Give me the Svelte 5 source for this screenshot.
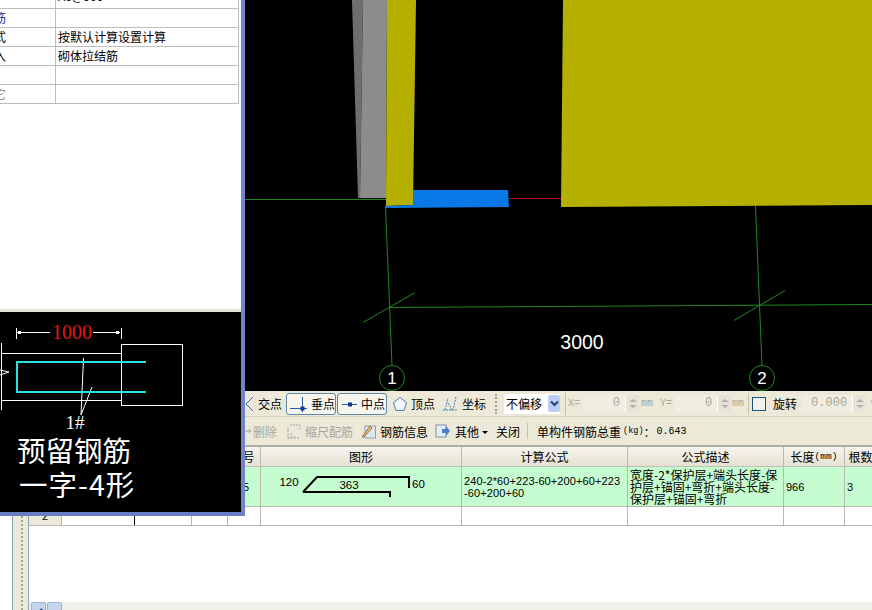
<script>
  const attrRows = [
    { key: "", val: "A6@500", cut: true },
    { key: "筋", val: "", blue: true },
    { key: "式", val: "按默认计算设置计算" },
    { key: "入", val: "砌体拉结筋" },
    { key: "", val: "" },
    { key: "它", val: "", grey: true }
  ];
  const cols = [33, 73, 57, 36, 33, 201, 166, 156, 61, 32];
  const heads = ["", "", "", "", "号", "图形", "计算公式", "公式描述", "长度", "根数"];
</script>

<div class="screen">
  <div class="main">
    <svg class="cad" width="872" height="391" viewBox="0 0 872 391">
      <polygon points="352,0 363,0 360,198 358,198" fill="#6e6e6e" />
      <polygon points="363,0 387,0 386,198 360,198" fill="#8c8c8c" />
      <polygon points="387,0 416,0 413,205 386,206" fill="#b5b000" />
      <polygon points="563,0 872,0 872,205 561,207" fill="#b5b000" />
      <polygon points="413,190 508,190 509,207 386,208 386,206 413,205" fill="#0a78e6" />
      <line x1="509" y1="198.500" x2="561" y2="198.500" stroke="#b01020" />
      <g stroke="#208820" fill="none">
        <line x1="245" y1="199.500" x2="386" y2="199.500" />
        <line x1="385.500" y1="206" x2="392" y2="366" />
        <line x1="755.500" y1="206" x2="762" y2="366" />
        <line x1="389" y1="307.500" x2="872" y2="304.500" />
        <line x1="363" y1="322.500" x2="415" y2="292.500" />
        <line x1="734" y1="320.500" x2="785" y2="290.500" />
        <circle cx="392" cy="378" r="12.500" />
        <circle cx="762" cy="378" r="12.500" />
      </g>
      <g class="cad-text">
        <text x="582" y="349" text-anchor="middle" font-size="19.500">3000</text>
        <text x="392" y="384" text-anchor="middle" font-size="17">1</text>
        <text x="762" y="384" text-anchor="middle" font-size="17">2</text>
      </g>
    </svg>

    <div class="toolbar snaps">
      <svg class="ic" width="10" height="20" viewBox="0 0 10 20"><path d="M8 3 1 10l7 7" stroke="#3c6ea0" fill="none" /></svg>
      <span class="tool jiao">交点</span>
      <span class="toggle">
        <svg width="19" height="18" viewBox="0 0 19 18"><path d="M0 13.500h17M12.500 2v15" stroke="#2a5ca8" fill="none" /><rect x="10.500" y="11.500" width="4" height="4" fill="#123c8c" /></svg>
        垂点
      </span>
      <span class="toggle mid-snap">
        <svg width="17" height="16" viewBox="0 0 17 16"><path d="M0 8.500h15" stroke="#2a5ca8" fill="none" /><rect x="6" y="6.500" width="4" height="4" fill="#123c8c" /></svg>
        中点
      </span>
      <svg class="ic vertex" width="16" height="16" viewBox="0 0 16 16"><path d="M8 1.500 14.500 6.500 12 14.500H4L1.500 6.500Z" stroke="#4a80b8" fill="#f4f6f8" /></svg>
      <span class="tool">顶点</span>
      <svg class="ic coord" width="17" height="18" viewBox="0 0 17 18"><path d="M3 15 6 3M1 15h15M6 8l4 7M14 2l-3 13" stroke="#3c86b8" stroke-dasharray="2 1" fill="none" /></svg>
      <span class="tool">坐标</span>
      <span class="grip"></span>
      <span class="combo">不偏移<span class="arrow"><svg width="9" height="7" viewBox="0 0 9 7"><path d="M1 1.500 4.500 5 8 1.500" stroke="#25407a" stroke-width="2" fill="none" /></svg></span></span>
      <span class="sep s1"></span>
      <span class="muted lab">X=</span>
      <span class="spin"><span class="num w42">0</span><span class="updown"><i></i><i class="down"></i></span></span>
      <span class="muted mm m2">mm</span>
      <span class="muted lab y">Y=</span>
      <span class="spin"><span class="num w42">0</span><span class="updown"><i></i><i class="down"></i></span></span>
      <span class="muted mm m1">mm</span>
      <span class="sep s2"></span>
      <span class="check"></span>
      <span class="rot">旋转</span>
      <span class="spin"><span class="num w50">0.000</span><span class="updown"><i></i><i class="down"></i></span></span>
      <span class="muted deg">°</span>
    </div>

    <div class="toolbar actions">
      <svg class="ic back" width="8" height="8" viewBox="0 0 8 8"><path d="M0 4h5M3.500 2 6 4 3.500 6" stroke="#a8a898" fill="none" /></svg>
      <span class="muted">删除</span>
      <svg class="ic a1" width="14" height="16" viewBox="0 0 14 16"><path d="M1 15V4M4 15v-5M7 15v-3M1 15h12M3 2h10v4" stroke="#a8a8a0" stroke-dasharray="2 1" fill="none" /></svg>
      <span class="muted g4">缩尺配筋</span>
      <svg class="ic a2" width="15" height="16" viewBox="0 0 15 16"><rect x="4" y="3" width="10.500" height="12" fill="#dfe8f2" stroke="#8aa0b8" /><path d="M1 14 9 3l2 2-8 9Z" fill="#e8c070" stroke="#907040" /></svg>
      <span class="g4">钢筋信息</span>
      <svg class="ic a3" width="16" height="16" viewBox="0 0 16 16"><rect x="1" y="2" width="10" height="12" fill="#e4ecf4" stroke="#7a90a8" /><path d="M7 6h4V3l4 5-4 5v-3H7Z" fill="#4a80c8" /></svg>
      <span class="g4">其他</span>
      <span class="caret"></span>
      <span>关闭</span>
      <span class="sep short"></span>
      <span>单构件钢筋总重</span>
      <span class="kg">(kg)</span>
      <span class="colon">：</span>
      <span class="weight">0.643</span>
    </div>

    <div class="lower">
      <div class="gutter"></div>
      <div class="grid">
        <div class="row head">
          {#each cols as w, i}
            <div class="cell" class:hao={i === 4} style="width:{w}px">
              {heads[i]}{#if i === 8}<small>(mm)</small>{/if}
            </div>
          {/each}
        </div>
        <div class="row data">
          <div class="cell" style="width:{cols[0]}px"></div>
          <div class="cell" style="width:{cols[1]}px"></div>
          <div class="cell" style="width:{cols[2]}px"></div>
          <div class="cell" style="width:{cols[3]}px"></div>
          <div class="cell mid cut-val" style="width:{cols[4]}px">5</div>
          <div class="cell shape" style="width:{cols[5]}px">
            <svg width="200" height="39" viewBox="0 0 200 39">
              <path d="M42 25 56 10H148V21M42 25H129V30" fill="none" stroke="#000" stroke-width="2" />
              <text x="28" y="19" text-anchor="middle">120</text>
              <text x="88" y="22" text-anchor="middle">363</text>
              <text x="151" y="21">60</text>
            </svg>
          </div>
          <div class="cell text formula" style="width:{cols[6]}px">240-2*60+223-60+200+60+223<br />-60+200+60</div>
          <div class="cell text" style="width:{cols[7]}px">宽度-2*保护层+端头长度-保<br />护层+锚固+弯折+端头长度-<br />保护层+锚固+弯折</div>
          <div class="cell mid" style="width:{cols[8]}px">966</div>
          <div class="cell mid" style="width:{cols[9]}px">3</div>
        </div>
        <div class="row blank">
          <div class="cell idx2" style="width:{cols[0]}px">2</div>
          <div class="cell cursor" style="width:{cols[1]}px"></div>
          <div class="cell" style="width:{cols[2]}px"></div>
          <div class="cell" style="width:{cols[3]}px"></div>
          <div class="cell" style="width:{cols[4]}px"></div>
          <div class="cell" style="width:{cols[5]}px"></div>
          <div class="cell" style="width:{cols[6]}px"></div>
          <div class="cell" style="width:{cols[7]}px"></div>
          <div class="cell" style="width:{cols[8]}px"></div>
          <div class="cell" style="width:{cols[9]}px"></div>
        </div>
        <div class="filler"></div>
        <div class="tabs">
          <span class="tab"><svg width="13" height="10" viewBox="0 0 13 10"><path d="M3 9 10 2" stroke="#24406c" stroke-width="2" /></svg></span>
          <span class="tab"><svg width="13" height="10" viewBox="0 0 13 10"><path d="M2 3v7M5 3v7M8 3v7M11 3v7" stroke="#7a94c8" /></svg></span>
        </div>
      </div>
    </div>
  </div>

  <div class="win">
    <div class="attrs">
      {#each attrRows as r}
        <div class="attr" class:cut={r.cut}>
          <div class="k" class:blue={r.blue} class:grey={r.grey}><span>{r.key}</span></div>
          <div class="v">{r.val}</div>
        </div>
      {/each}
    </div>
    <div class="spacer"></div>
    <div class="preview">
      <svg width="241" height="200" viewBox="0 0 241 200">
        <g fill="none" stroke="#fff">
          <path d="M16.500 16v11M121.500 16v11M17 20.500H50M93 20.500h27" />
          <rect x="121.500" y="32.500" width="61" height="61" />
          <path d="M1.500 31v67M1 41.500H121M1 88.500H121M0 58l9 2-9 3" />
          <path d="M83.500 46 81 103 92 75" />
        </g>
        <rect x="18" y="19" width="3" height="3" fill="#fff" />
        <rect x="116" y="19" width="3" height="3" fill="#fff" />
        <path d="M146 50H17V80H146" fill="none" stroke="#2ce0e0" stroke-width="2" />
        <text class="dim" x="72" y="27" text-anchor="middle">1000</text>
        <text class="tag" x="75" y="117" text-anchor="middle">1#</text>
        <text class="title" x="17" y="150">预留钢筋</text>
        <text class="title wide" x="19" y="184">一字-4形</text>
      </svg>
    </div>
  </div>
</div>

<style>
  :global(body) {
    margin: 0;
    background: #fff;
  }

  .screen {
    position: relative;
    width: 872px;
    height: 610px;
    overflow: hidden;
    font-family: "Noto Sans CJK SC", "Liberation Sans", sans-serif;
    font-size: 12px;
    color: #000;
  }

  .main {
    height: 100%;
    display: flex;
    flex-direction: column;
  }

  .cad {
    display: block;
    flex: none;
    background: #000;
  }

  .cad-text text {
    fill: #fff;
    font-family: "Liberation Sans", sans-serif;
  }

  .toolbar {
    display: flex;
    align-items: center;
    flex: none;
    background: #ece9d8;
    box-sizing: border-box;
    white-space: nowrap;
    padding-left: 245px;
  }

  .toolbar > * {
    flex: none;
  }

  .snaps {
    height: 26px;
    border-bottom: 1px solid #d8d4c0;
  }

  .actions {
    height: 30px;
    border-bottom: 2px solid #a8b0a8;
  }

  .tool {
    margin-left: 3px;
  }

  .jiao {
    margin-right: 4px;
  }

  .toggle {
    display: flex;
    align-items: center;
    width: 50px;
    height: 22px;
    padding-left: 3px;
    gap: 2px;
    background: #f6f5ee;
    border: 1px solid #5f88a8;
    border-radius: 3px;
    box-sizing: border-box;
  }

  .mid-snap {
    margin-left: 1px;
    padding-left: 4px;
  }

  .vertex {
    margin-left: 5px;
  }

  .coord {
    margin-left: 7px;
  }

  .grip {
    width: 2px;
    height: 20px;
    margin: 0 5px 0 9px;
    border-left: 2px dotted #a8a490;
  }

  .combo {
    display: flex;
    align-items: center;
    width: 56px;
    height: 20px;
    background: #fff;
    padding-left: 2px;
    box-sizing: border-box;
    justify-content: space-between;
  }

  .arrow {
    display: flex;
    align-items: center;
    justify-content: center;
    width: 12px;
    height: 17px;
    background: #bccdf0;
    border-radius: 2px;
  }

  .sep {
    width: 1px;
    height: 22px;
    background: #c4c0aa;
  }

  .s1 {
    margin: 0 2px 0 5px;
  }

  .s2 {
    margin: 0 3px 0 4px;
  }

  .muted {
    color: #a8a898;
  }

  .lab,
  .mm {
    font-family: "Liberation Mono", monospace;
    font-size: 10px;
  }

  .lab {
    margin-right: 3px;
  }

  .lab.y {
    margin-left: 7px;
  }

  .m1 {
    margin-left: 1px;
  }

  .m2 {
    margin-left: 2px;
  }

  .spin {
    display: flex;
    height: 17px;
    background: #f0eee0;
  }

  .num {
    font-family: "Liberation Mono", monospace;
    text-align: right;
    color: #a8a898;
    line-height: 16px;
    padding-right: 5px;
    box-sizing: border-box;
  }

  .w42 {
    width: 42px;
  }

  .w50 {
    width: 50px;
  }

  .updown {
    display: flex;
    flex-direction: column;
    align-items: center;
    justify-content: center;
    gap: 3px;
    width: 14px;
    background: #e6e4d8;
    border-left: 1px solid #fff;
    box-sizing: border-box;
  }

  .updown i {
    width: 0;
    height: 0;
    border: 4px solid transparent;
    border-top: 0;
    border-bottom: 3px solid #b4b2a4;
  }

  .updown i.down {
    border: 4px solid transparent;
    border-bottom: 0;
    border-top: 3px solid #b4b2a4;
  }

  .check {
    width: 14px;
    height: 14px;
    border: 1px solid #1c5180;
    background: #f2f2ec;
    margin-right: 7px;
    box-sizing: border-box;
  }

  .rot {
    margin-right: 5px;
  }

  .deg {
    margin-left: 4px;
  }

  .back {
    margin-right: 0;
  }

  .a1 {
    margin-left: 10px;
  }

  .a2 {
    margin-left: 8px;
  }

  .a3 {
    margin-left: 7px;
  }

  .g4 {
    margin-left: 4px;
  }

  .caret {
    width: 0;
    height: 0;
    margin: 2px 8px 0 3px;
    border: 3px solid transparent;
    border-top-color: #000;
    border-bottom: 0;
  }

  .short {
    height: 16px;
    margin: 0 9px 0 7px;
  }

  .kg {
    font-family: "Liberation Mono", monospace;
    font-size: 8.500px;
    margin-left: 2px;
  }

  .colon {
    width: 13px;
  }

  .weight {
    font-family: "Liberation Mono", monospace;
    font-size: 10px;
  }

  .lower {
    flex: 1;
    min-height: 0;
    display: flex;
    padding-left: 12px;
  }

  .gutter {
    position: relative;
    width: 17px;
    flex: none;
    background: #ece9d8;
    border-left: 1px solid #8ea4b8;
    border-right: 1px solid #8ea4b8;
    box-sizing: border-box;
  }

  .gutter::after {
    content: "";
    position: absolute;
    left: 8px;
    top: 0;
    bottom: 0;
    border-left: 2px dotted #a8a490;
  }

  .grid {
    flex: 1;
    min-width: 0;
    display: flex;
    flex-direction: column;
    overflow: hidden;
    background: #fff;
  }

  .row {
    display: flex;
    flex: none;
  }

  .head {
    height: 20px;
    background: linear-gradient(#f6f5ef, #e4e1d2);
    line-height: 18px;
    border-bottom: 1px solid #c0c0b8;
    box-sizing: border-box;
  }

  .head .cell {
    justify-content: center;
  }

  .head .hao {
    padding-left: 9px;
  }

  .head small {
    font-family: "Liberation Mono", monospace;
    font-size: 9.500px;
  }

  .data {
    height: 40px;
    background: #c6fdd0;
    border-bottom: 1px solid #b8b8b0;
    box-sizing: border-box;
  }

  .blank {
    height: 19px;
    border-bottom: 1px solid #b8b8b0;
    box-sizing: border-box;
  }

  .cell {
    display: flex;
    align-items: center;
    flex: none;
    box-sizing: border-box;
    border-right: 1px solid #b8b8b0;
    overflow: hidden;
  }

  .cursor {
    border-right-color: #000;
  }

  .idx2 {
    background: #ece9d8;
    justify-content: center;
    align-items: flex-start;
    font-family: "Liberation Sans", sans-serif;
    font-size: 11px;
    line-height: 12px;
    padding-top: 3px;
  }

  .mid {
    padding-left: 2px;
    font-family: "Liberation Sans", sans-serif;
    font-size: 11px;
  }

  .mid.cut-val {
    padding-left: 15px;
  }

  .text {
    padding-left: 2px;
    line-height: 12px;
    white-space: nowrap;
  }

  .formula {
    font-family: "Liberation Sans", sans-serif;
    font-size: 11px;
    letter-spacing: 0.100px;
  }

  .shape svg {
    display: block;
  }

  .shape text {
    font-family: "Liberation Sans", sans-serif;
    font-size: 11.500px;
  }

  .filler {
    flex: 1;
  }

  .tabs {
    display: flex;
    gap: 1px;
    height: 8px;
    padding-left: 2px;
    background: #f0efe8;
    overflow: hidden;
  }

  .tab {
    width: 15px;
    height: 12px;
    background: #c6d4ee;
    border: 1px solid #9ab0d4;
    box-sizing: border-box;
    border-radius: 2px 2px 0 0;
  }

  .win {
    position: absolute;
    left: 0;
    top: 0;
    width: 245px;
    height: 516px;
    box-sizing: border-box;
    background: #fff;
    border-right: 4px solid #7086c8;
    border-bottom: 4px solid #6a7ec4;
    display: flex;
    flex-direction: column;
  }

  .attrs {
    width: 238px;
    margin-top: -10px;
    border-right: 1px solid #bcbcbc;
    flex: none;
  }

  .attr {
    display: flex;
    height: 19px;
    border-bottom: 1px solid #bcbcbc;
    box-sizing: border-box;
    line-height: 18px;
  }

  .k {
    width: 56px;
    flex: none;
    border-right: 1px solid #bcbcbc;
    box-sizing: border-box;
    display: flex;
    justify-content: flex-end;
    overflow: hidden;
  }

  .k span {
    margin-right: 49px;
  }

  .blue {
    color: #24248c;
  }

  .grey {
    color: #909090;
  }

  .v {
    padding-left: 2px;
  }

  .cut {
    line-height: 12px;
  }

  .spacer {
    flex: 1;
    border-bottom: 3px solid #e4e1d2;
  }

  .preview {
    height: 200px;
    background: #000;
    flex: none;
  }

  .preview svg {
    display: block;
  }

  .dim {
    fill: #e01818;
    font-family: "Liberation Serif", serif;
    font-size: 20px;
  }

  .tag {
    fill: #fff;
    font-family: "Liberation Serif", serif;
    font-size: 19px;
  }

  .title {
    fill: #fff;
    font-family: "Noto Sans CJK SC", serif;
    font-size: 28.500px;
  }

  .wide {
    letter-spacing: 1px;
  }
</style>
